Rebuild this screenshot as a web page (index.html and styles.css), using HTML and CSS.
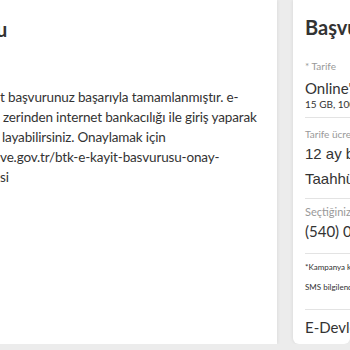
FILE: index.html
```html
<!DOCTYPE html>
<html lang="tr">
<head>
<meta charset="utf-8">
<link rel="stylesheet" href="styles.css">
</head>
<body>
<div class="page">
  <section class="left-card">
    <h1 class="left-title">u</h1>
    <div class="para">
      <div class="ln ln1">t başvurunuz başarıyla tamamlanmıştır. e-</div>
      <div class="ln ln2">zerinden internet bankacılığı ile giriş yaparak</div>
      <div class="ln ln3">layabilirsiniz. Onaylamak için</div>
      <div class="ln ln4">ve.gov.tr/btk-e-kayit-basvurusu-onay-</div>
      <div class="ln ln5">si</div>
    </div>
  </section>
  <aside class="right-card">
    <h2 class="r-title">Başvuru Özeti</h2>
    <div class="label l-tarife">* Tarife</div>
    <div class="value v-online">Online'a Özel Tarife</div>
    <div class="sub">15 GB, 1000 DK, 1000 SMS</div>
    <hr class="div d1">
    <div class="label l-ucret">Tarife ücreti</div>
    <div class="value-arial a1">12 ay boyunca 150 TL</div>
    <div class="value-arial a2">Taahhüt süresi 12 ay</div>
    <hr class="div d2">
    <div class="label l-sec">Seçtiğiniz numara</div>
    <div class="value v-num">(540) 000 00 00</div>
    <hr class="div d3">
    <div class="tiny t1">*Kampanya koşulları geçerlidir.</div>
    <div class="tiny t2">SMS bilgilendirmesi yapılacaktır.</div>
    <hr class="div d4">
    <div class="value v-edev">E-Devlet onayı</div>
  </aside>
</div>
</body>
</html>
```
FILE: styles.css
```css
html, body {
  margin: 0;
  padding: 0;
}
body {
  background: #ececec;
  width: 350px;
  height: 350px;
  overflow: hidden;
  font-family: Lato, "Noto Sans", sans-serif;
  color: #333;
}
.page {
  display: flex;
  gap: 16px;
  height: 344px;
  width: 350px;
  overflow: hidden;
}
.left-card {
  flex: 0 0 277px;
  background: #fff;
  box-shadow: 1px 0 3px rgba(0,0,0,0.06);
  overflow: hidden;
}
.left-title {
  margin: 17px 0 0 -4px;
  font-size: 20px;
  line-height: 24px;
  font-weight: 700;
  color: #333;
}
.para {
  margin-top: 46px;
  font-size: 13.5px;
  letter-spacing: -0.15px;
  line-height: 20px;
  white-space: nowrap;
}
.ln2 { padding-left: 3px; }
.ln3 { padding-left: 2px; }
.right-card {
  flex: 1 1 auto;
  background: #fff;
  border-radius: 0 0 6px 6px;
  box-shadow: -1px 0 3px rgba(0,0,0,0.06);
  padding: 0 0 8px 12px;
  white-space: nowrap;
  overflow: hidden;
}
.r-title {
  margin: 15px 0 0 0;
  font-size: 20px;
  line-height: 24px;
  font-weight: 700;
  color: #333;
}
.label {
  font-size: 10px;
  line-height: 14px;
  color: #999;
}
.l-tarife { margin-top: 20px; }
.value {
  font-size: 15px;
  line-height: 18px;
  color: #333;
}
.v-online { margin-top: 6px; }
.sub {
  margin-top: 1px;
  font-size: 10px;
  line-height: 12px;
  color: #333;
}
.div {
  border: 0;
  border-top: 1px solid #e3e3e3;
  margin: 0;
  height: 0;
}
.d1 { margin-top: 7px; }
.l-ucret { margin-top: 9px; }
.value-arial {
  font-family: "Liberation Sans", Arial, sans-serif;
  font-size: 15px;
  line-height: 25px;
  color: #333;
}
.d2 { margin-top: 7px; }
.l-sec { margin-top: 6px; font-size: 11px; }
.v-num { margin-top: 2px; line-height: 20px; }
.d3 { margin-top: 12px; }
.tiny {
  font-size: 8px;
  line-height: 12px;
  color: #333;
}
.t1 { margin-top: 7px; }
.t2 { margin-top: 8px; }
.d4 { margin-top: 16px; }
.v-edev { margin-top: 7px; line-height: 20px; }
```
